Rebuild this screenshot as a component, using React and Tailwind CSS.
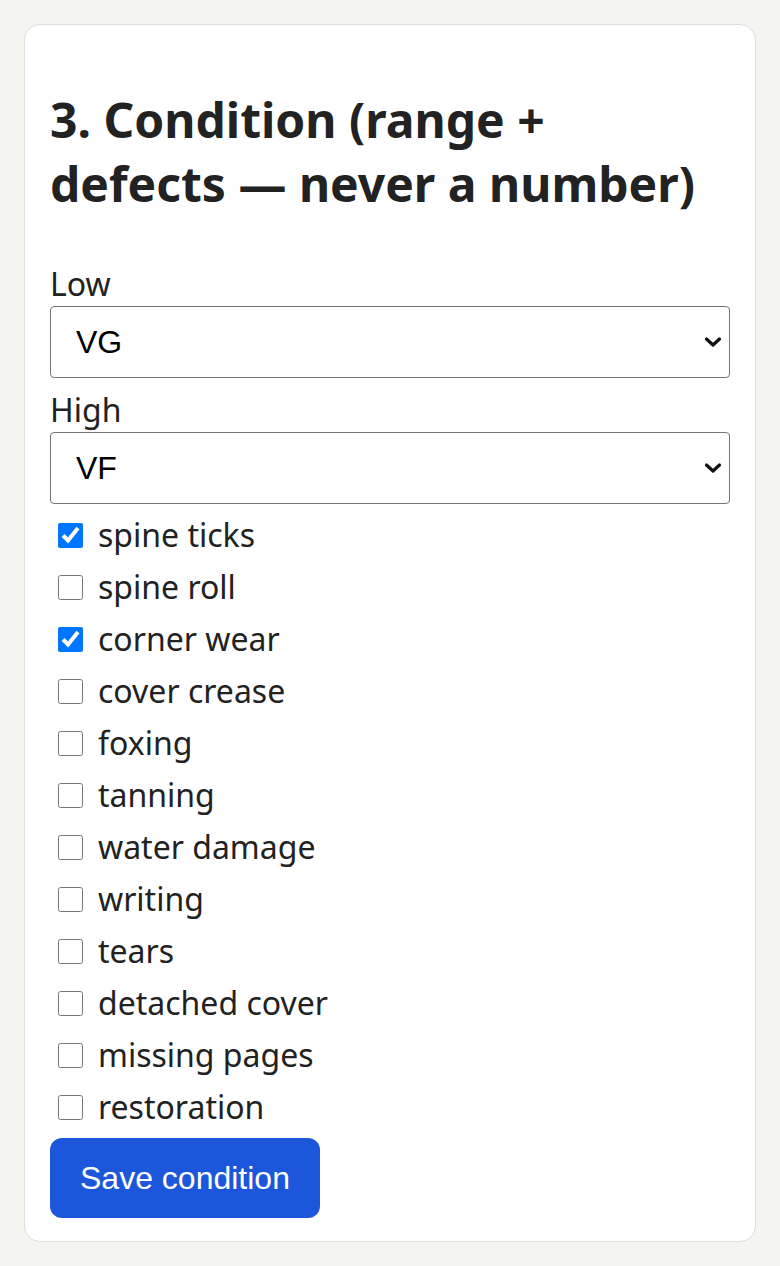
import { useState } from "react";

const defects = [
  "spine ticks",
  "spine roll",
  "corner wear",
  "cover crease",
  "foxing",
  "tanning",
  "water damage",
  "writing",
  "tears",
  "detached cover",
  "missing pages",
  "restoration",
];

const grades = ["PR", "FR", "G", "VG", "FN", "VF", "NM", "M"];

const Chevron = () => (
  <svg
    className="pointer-events-none absolute right-[8px] top-1/2 -translate-y-1/2"
    width="18"
    height="12"
    viewBox="0 0 18 12"
    fill="none"
  >
    <path d="M2.5 3l6.5 6 6.5-6" stroke="#111" strokeWidth="3.2" strokeLinecap="round" strokeLinejoin="round" />
  </svg>
);

const GradeSelect = ({ label, value, onChange }) => (
  <label className="flex flex-col">
    <span className="text-[32px] leading-[44px]">{label}</span>
    <div className="relative">
      <select
        value={value}
        onChange={(e) => onChange(e.target.value)}
        className="w-full h-[72px] appearance-none rounded-[4px] border-[1.5px] border-[#767676] bg-white pl-[25px] pr-10 text-[32px] text-black"
        style={{ fontFamily: '"Liberation Sans", Arial, sans-serif' }}
      >
        {grades.map((g) => (
          <option key={g}>{g}</option>
        ))}
      </select>
      <Chevron />
    </div>
  </label>
);

const App = () => {
  const [low, setLow] = useState("VG");
  const [high, setHigh] = useState("VF");
  const [checked, setChecked] = useState({ "spine ticks": true, "corner wear": true });

  return (
    <div
      className="min-h-screen bg-[#f4f4f0] p-[24px] text-[#222]"
      style={{ fontFamily: '"Noto Sans", sans-serif' }}
    >
      <section className="rounded-[16px] border-[1.5px] border-[#dedede] bg-white px-[25px] pt-[63px] pb-[23px]">
        <h2 className="mb-[46px] text-[48px] font-bold leading-[64px]">
          3. Condition (range + defects — never a number)
        </h2>
        <div className="flex flex-col gap-[10px]">
          <GradeSelect label="Low" value={low} onChange={setLow} />
          <GradeSelect label="High" value={high} onChange={setHigh} />
          {defects.map((d) => (
            <label key={d} className="flex items-center text-[32px] leading-[42px]">
              <input
                type="checkbox"
                checked={!!checked[d]}
                onChange={() => setChecked({ ...checked, [d]: !checked[d] })}
                className="ml-[8px] mr-[15px] h-[25px] w-[25px]"
              />
              {d}
            </label>
          ))}
          <div>
            <button
              className="h-[80px] rounded-[12px] bg-[#1b56db] px-[30px] text-[32px] text-white"
              style={{ fontFamily: '"Liberation Sans", Arial, sans-serif' }}
            >
              Save condition
            </button>
          </div>
        </div>
      </section>
    </div>
  );
};

export default App;
